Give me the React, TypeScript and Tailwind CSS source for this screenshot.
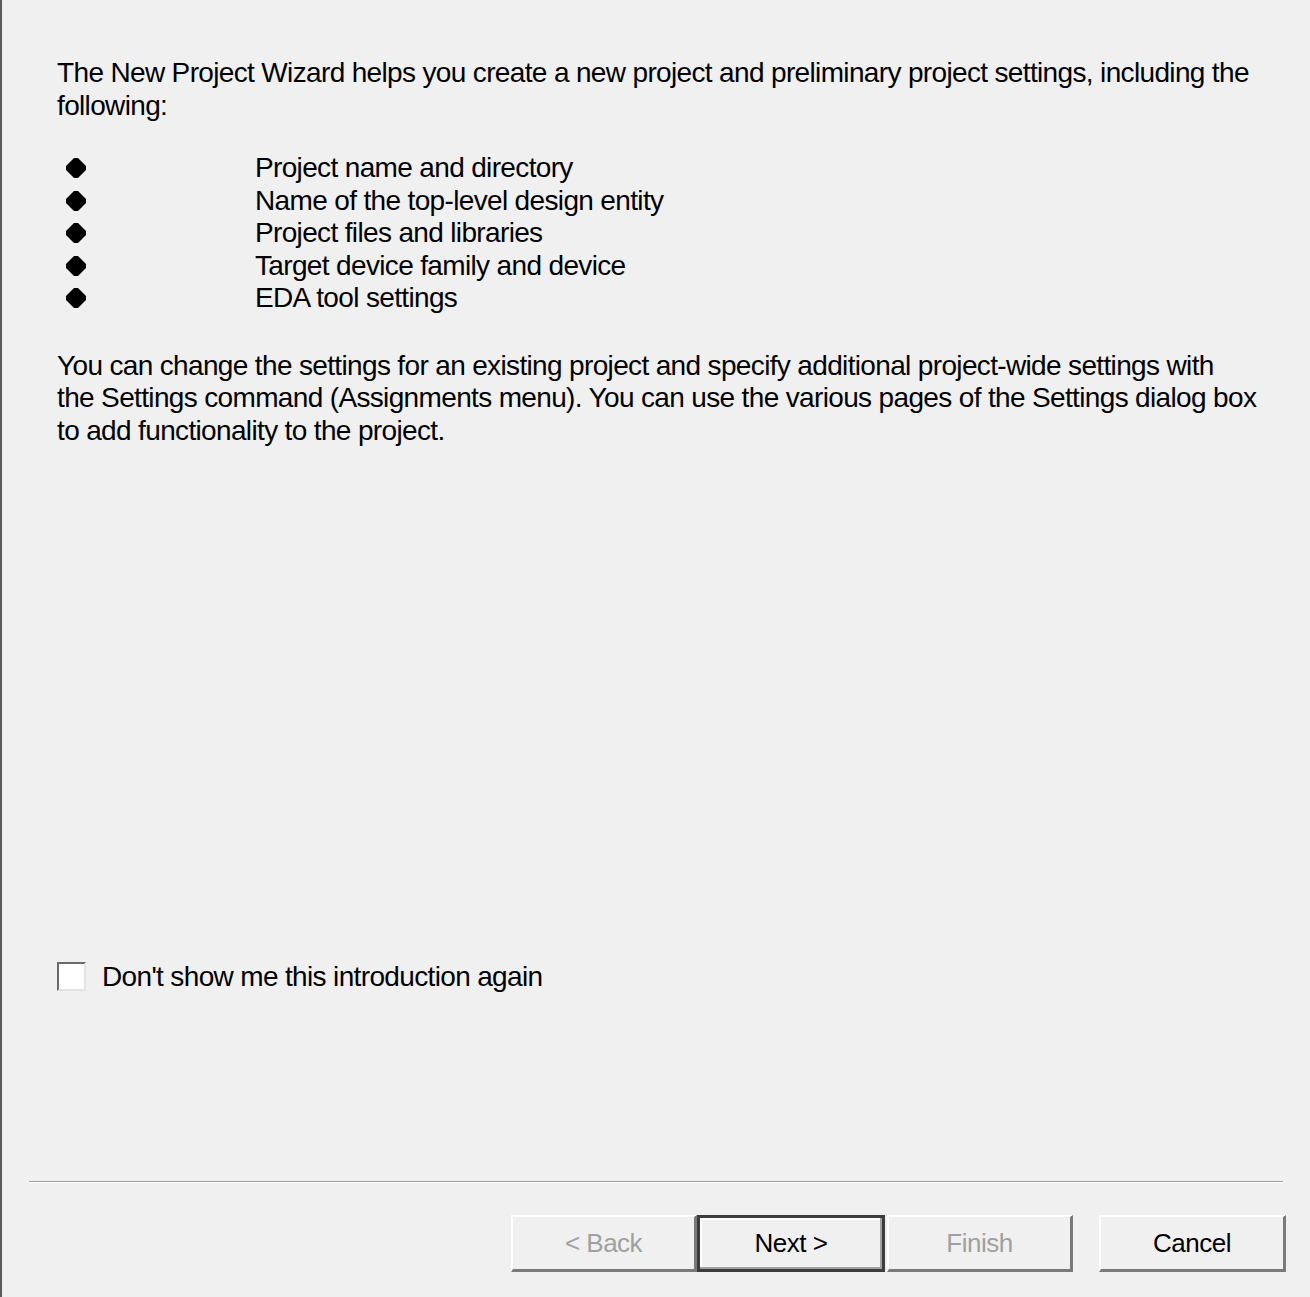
import React from 'react'

const items = [
  'Project name and directory',
  'Name of the top-level design entity',
  'Project files and libraries',
  'Target device family and device',
  'EDA tool settings',
]

function Bullet() {
  return (
    <svg width="20" height="20" viewBox="0 0 20 20" className="shrink-0">
      <path d="M8 0h4l8 8v4l-8 8H8l-8-8V8z" fill="#000" />
    </svg>
  )
}

function WinButton({
  label,
  width,
  disabled,
  isDefault,
}: {
  label: string
  width: string
  disabled?: boolean
  isDefault?: boolean
}) {
  return (
    <div
      className={
        'flex h-[57px] items-center justify-center bg-[#f0f0f0] text-[26px] tracking-[-0.5px] ' +
        width +
        (isDefault
          ? ' border-[3px] border-[#3c3c3c] shadow-[inset_-2px_-2px_0_#a0a0a0,inset_2px_2px_0_#ffffff]'
          : ' border-t-2 border-l-2 border-t-white border-l-white border-r-[3px] border-b-[3px] border-r-[#7a7a7a] border-b-[#7a7a7a]') +
        (disabled ? ' text-[#a0a0a0]' : ' text-black')
      }
    >
      {label}
    </div>
  )
}

export default function App() {
  return (
    <div
      className="flex h-[1297px] w-[1310px] flex-col border-l-2 border-l-[#5a5a5a] bg-[#f0f0f0] text-black"
      style={{ fontFamily: '"Liberation Sans", Arial, sans-serif' }}
    >
      <div className="flex flex-1 flex-col pl-[55px] pr-[30px] pt-[57px] text-[28px] leading-[32.5px] tracking-[-0.65px]">
        <p className="whitespace-nowrap">
          The New Project Wizard helps you create a new project and preliminary project settings, including the
          <br />
          following:
        </p>
        <ul className="mt-[30px] flex flex-col">
          {items.map((t) => (
            <li key={t} className="flex h-[32.5px] items-center">
              <div className="w-[198px] pl-[9px]">
                <Bullet />
              </div>
              <span>{t}</span>
            </li>
          ))}
        </ul>
        <p className="mt-[35px] whitespace-nowrap">
          You can change the settings for an existing project and specify additional project-wide settings with
          <br />
          the Settings command (Assignments menu). You can use the various pages of the Settings dialog box
          <br />
          to add functionality to the project.
        </p>
        <div className="mt-auto mb-[188px] flex items-center gap-[16px]">
          <div className="h-[29px] w-[29px] border-2 border-t-[#6a6a6a] border-l-[#6a6a6a] border-r-[#e3e3e3] border-b-[#e3e3e3] bg-white" />
          <span>Don&apos;t show me this introduction again</span>
        </div>
      </div>
      <div className="mx-[27px] h-[2px] border-t border-t-[#a0a0a0] border-b border-b-white" />
      <div className="flex justify-end pr-[24px] pt-[32px] pb-[25px]">
        <WinButton label="< Back" width="w-[186px]" disabled />
        <WinButton label="Next >" width="w-[188px]" isDefault />
        <div className="w-[2px]" />
        <WinButton label="Finish" width="w-[186px]" disabled />
        <div className="w-[26px]" />
        <WinButton label="Cancel" width="w-[187px]" />
      </div>
    </div>
  )
}
